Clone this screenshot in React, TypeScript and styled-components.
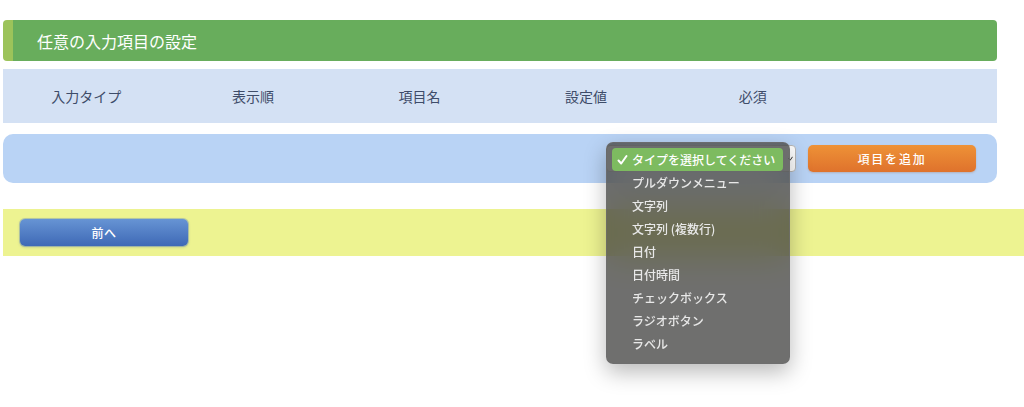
import React from 'react';
import styled, { createGlobalStyle } from 'styled-components';

const GlobalStyle = createGlobalStyle`
  html, body {
    margin: 0;
    padding: 0;
    background: #ffffff;
    overflow: hidden;
  }
  body {
    font-family: "Noto Sans CJK JP", "Noto Sans", sans-serif;
  }
`;

const Page = styled.div`
  width: 1024px;
  height: 407px;
  padding: 20px 0 0 3px;
  box-sizing: border-box;
  display: flex;
  flex-direction: column;
`;

const Section = styled.div`
  width: 994px;
  display: flex;
  flex-direction: column;
`;

const TitleBar = styled.div`
  height: 41px;
  display: flex;
  align-items: center;
  box-sizing: border-box;
  padding-left: 24px;
  background: #68ad5c;
  border-left: 10px solid #9cc35a;
  border-radius: 4px;
  color: #ffffff;
  font-size: 16px;
`;

const TableHead = styled.div`
  margin-top: 8px;
  height: 54px;
  display: grid;
  grid-template-columns: repeat(5, 166.6px) 1fr;
  align-items: center;
  background: #d4e1f4;
`;

const HeadCell = styled.div`
  text-align: center;
  color: #3e4c69;
  font-size: 14px;
`;

const AddRow = styled.div`
  margin-top: 11px;
  height: 49px;
  display: flex;
  align-items: center;
  justify-content: flex-end;
  gap: 12px;
  padding-right: 21px;
  background: #b9d3f5;
  border-radius: 10px;
`;

const SelectWrap = styled.div`
  position: relative;
  width: 190px;
  height: 27px;
`;

const SelectBox = styled.div`
  height: 100%;
  box-sizing: border-box;
  background: #ffffff;
  border: 1px solid #b8b8b8;
  border-radius: 4px;
  display: flex;
  align-items: center;
  justify-content: flex-end;
  padding-right: 2px;
`;

const ActionButton = styled.button<{ $tone: 'orange' | 'blue' }>`
  width: 168px;
  height: 27px;
  border: none;
  border-radius: 5px;
  color: #ffffff;
  font-family: inherit;
  font-size: 12px;
  font-weight: 500;
  letter-spacing: ${p => (p.$tone === 'orange' ? '1.8px' : '0.5px')};
  background: ${p =>
    p.$tone === 'orange'
      ? 'linear-gradient(#ee9237, #df722c)'
      : 'linear-gradient(#6794d4, #3e69b6)'};
  box-shadow: ${p =>
    p.$tone === 'orange'
      ? '0 1px 2px rgba(160, 80, 20, 0.25)'
      : '0 0 0 1px rgba(90, 130, 200, 0.35), 0 1px 3px rgba(40, 70, 140, 0.3)'};
  cursor: pointer;
`;

const FooterBar = styled.div`
  margin-top: 26px;
  height: 47px;
  display: flex;
  align-items: center;
  padding-left: 17px;
  background: #edf391;
`;

const Menu = styled.div`
  position: absolute;
  top: -3px;
  left: 0;
  width: 184px;
  box-sizing: border-box;
  padding: 5px 0 8px;
  background: rgba(50, 50, 48, 0.7);
  backdrop-filter: blur(18px);
  border: 1px solid rgba(110, 110, 110, 0.7);
  border-radius: 7px;
  box-shadow: 0 8px 22px rgba(0, 0, 0, 0.28);
  z-index: 10;
`;

const MenuItem = styled.div<{ $active?: boolean }>`
  position: relative;
  height: 23px;
  margin: 0 6px 0 5px;
  padding-left: 20px;
  display: flex;
  align-items: center;
  border-radius: 4px;
  font-size: 12px;
  font-weight: 500;
  color: ${p => (p.$active ? '#ffffff' : '#e8e8e8')};
  background: ${p => (p.$active ? '#7dbb60' : 'transparent')};
  white-space: nowrap;
`;

const Check = styled.svg`
  position: absolute;
  left: 5px;
  top: 50%;
  transform: translateY(-50%);
`;

const Arrow = styled.svg`
  display: block;
`;

const columns = ['入力タイプ', '表示順', '項目名', '設定値', '必須', ''];

const options = [
  'タイプを選択してください',
  'プルダウンメニュー',
  '文字列',
  '文字列 (複数行)',
  '日付',
  '日付時間',
  'チェックボックス',
  'ラジオボタン',
  'ラベル',
];

const App: React.FC = () => {
  return (
    <>
      <GlobalStyle />
      <Page>
        <Section>
          <TitleBar>任意の入力項目の設定</TitleBar>
          <TableHead>
            {columns.map((c, i) => (
              <HeadCell key={i}>{c}</HeadCell>
            ))}
          </TableHead>
          <AddRow>
            <SelectWrap>
              <SelectBox>
                <Arrow width="5" height="5" viewBox="0 0 5 5">
                  <path d="M0.5 2.5 L2.2 4.2 L4.5 0.8" fill="none" stroke="#333" strokeWidth="1" />
                </Arrow>
              </SelectBox>
              <Menu>
                {options.map((o, i) => (
                  <MenuItem key={o} $active={i === 0}>
                    {i === 0 && (
                      <Check width="11" height="11" viewBox="0 0 11 11">
                        <path
                          d="M1.5 6 L4.2 9 L9.5 1.5"
                          fill="none"
                          stroke="#ffffff"
                          strokeWidth="2"
                          strokeLinecap="round"
                          strokeLinejoin="round"
                        />
                      </Check>
                    )}
                    {o}
                  </MenuItem>
                ))}
              </Menu>
            </SelectWrap>
            <ActionButton $tone="orange">項目を追加</ActionButton>
          </AddRow>
        </Section>
        <FooterBar>
          <ActionButton $tone="blue">前へ</ActionButton>
        </FooterBar>
      </Page>
    </>
  );
};

export default App;
